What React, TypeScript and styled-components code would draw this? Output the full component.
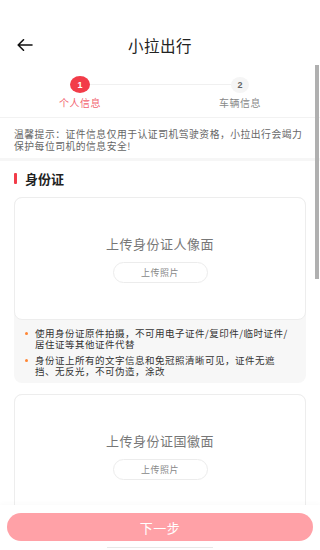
import React from 'react';
import styled, { createGlobalStyle } from 'styled-components';

const GlobalStyle = createGlobalStyle`
    html, body {
        margin: 0;
        padding: 0;
        background: #fff;
        overflow: hidden;
    }
    body {
        font-family: "Noto Sans CJK SC", "Noto Sans", sans-serif;
        color: #222;
    }
`

const notes = [
    '使用身份证原件拍摄，不可用电子证件/复印件/临时证件/居住证等其他证件代替',
    '身份证上所有的文字信息和免冠照清晰可见，证件无遮挡、无反光，不可伪造，涂改',
]

export default function App() {
    return (
        <Page>
            <GlobalStyle />
            <Header>
                <BackButton>
                    <svg width="16" height="12" viewBox="0 0 16 12" fill="none">
                        <path d="M15 6H1.5M6.5 0.8L1.2 6l5.3 5.2" stroke="#111" strokeWidth="1.6" strokeLinecap="round" strokeLinejoin="round" />
                    </svg>
                </BackButton>
                <Title>小拉出行</Title>
            </Header>

            <Steps>
                <Track>
                    <StepDot active>1</StepDot>
                    <TrackLine />
                    <StepDot>2</StepDot>
                </Track>
                <Labels>
                    <StepLabel active>个人信息</StepLabel>
                    <StepLabel>车辆信息</StepLabel>
                </Labels>
            </Steps>

            <Tip>温馨提示：证件信息仅用于认证司机驾驶资格，小拉出行会竭力保护每位司机的信息安全!</Tip>

            <Section>
                <SectionTitle>身份证</SectionTitle>

                <UploadGroup>
                    <UploadCard>
                        <UploadText>上传身份证人像面</UploadText>
                        <UploadButton>上传照片</UploadButton>
                    </UploadCard>
                    <Notes>
                        {notes.map((n) => (
                            <Note key={n}>{n}</Note>
                        ))}
                    </Notes>
                </UploadGroup>

                <UploadGroup>
                    <UploadCard>
                        <UploadText>上传身份证国徽面</UploadText>
                        <UploadButton>上传照片</UploadButton>
                    </UploadCard>
                    <Spacer />
                </UploadGroup>
            </Section>

            <Footer>
                <NextButton>下一步</NextButton>
                <HomeBar />
            </Footer>

            <ScrollThumb />
        </Page>
    )
}

const Page = styled.div`
    position: relative;
    width: 320px;
    height: 550px;
    overflow: hidden;
    background: #fff;
`

const Header = styled.div`
    margin-top: 25px;
    height: 40px;
    display: flex;
    align-items: center;
    justify-content: center;
    position: relative;
`

const BackButton = styled.div`
    position: absolute;
    left: 17px;
    top: 14px;
    display: flex;
`

const Title = styled.div`
    font-size: 15.5px;
    color: #222;
    letter-spacing: 0.5px;
`

const Steps = styled.div`
    height: 52px;
    border-bottom: 1px solid #f2f2f2;
    display: flex;
    flex-direction: column;
`

const Track = styled.div`
    margin-top: 11px;
    display: flex;
    align-items: center;
    padding-left: 70px;
    height: 17px;
`

const StepDot = styled.div<{ active?: boolean }>`
    width: ${(p) => (p.active ? '20px' : '18px')};
    height: ${(p) => (p.active ? '17px' : '16px')};
    border-radius: 50%;
    background: ${(p) => (p.active ? '#f23c49' : '#f5f5f5')};
    color: ${(p) => (p.active ? '#fff' : '#666')};
    font-family: "Liberation Sans", sans-serif;
    font-weight: bold;
    font-size: 9px;
    display: flex;
    align-items: center;
    justify-content: center;
`

const TrackLine = styled.div`
    width: 141px;
    height: 1px;
    background: #f0f0f0;
`

const Labels = styled.div`
    display: grid;
    grid-template-columns: 160px 160px;
    margin-top: 3px;
`

const StepLabel = styled.div<{ active?: boolean }>`
    text-align: center;
    font-size: 10px;
    letter-spacing: 0.5px;
    line-height: 14px;
    color: ${(p) => (p.active ? '#f2646f' : '#888')};
`

const Tip = styled.div`
    padding: 11px 14px 6px 14px;
    font-size: 9.8px;
    letter-spacing: 0.5px;
    line-height: 11.5px;
    color: #666;
    border-bottom: 3px solid #f6f6f6;
`

const Section = styled.div`
    padding: 9px 14px 0;
    display: flex;
    flex-direction: column;
    gap: 11px;
`

const SectionTitle = styled.div`
    display: flex;
    align-items: center;
    gap: 8px;
    font-size: 13px;
    font-weight: bold;
    line-height: 17px;
    color: #222;
    margin-bottom: -1px;

    &::before {
        content: '';
        width: 3px;
        height: 11px;
        border-radius: 1px;
        background: #f23c49;
    }
`

const UploadGroup = styled.div`
    background: #f7f7f7;
    border-radius: 8px;
`

const UploadCard = styled.div`
    background: #fff;
    border: 1px solid #ededed;
    border-radius: 8px;
    height: 123px;
    display: flex;
    flex-direction: column;
    align-items: center;
    padding-top: 37px;
    box-sizing: border-box;
`

const UploadText = styled.div`
    font-size: 13px;
    letter-spacing: 0.5px;
    line-height: 18px;
    color: #777;
`

const UploadButton = styled.div`
    margin-top: 9px;
    width: 95px;
    height: 21px;
    box-sizing: border-box;
    border: 1px solid #ececec;
    border-radius: 11px;
    font-size: 9px;
    letter-spacing: 0.5px;
    color: #888;
    display: flex;
    align-items: center;
    justify-content: center;
`

const Notes = styled.div`
    padding: 8px 16px 7px 21px;
    display: flex;
    flex-direction: column;
    gap: 6px;
`

const Note = styled.div`
    position: relative;
    font-size: 9.5px;
    letter-spacing: 0.5px;
    line-height: 10.5px;
    color: #333;

    &::before {
        content: '';
        position: absolute;
        left: -10px;
        top: 4px;
        width: 3px;
        height: 3px;
        border-radius: 50%;
        background: #ff8533;
    }
`

const Spacer = styled.div`
    height: 60px;
`

const Footer = styled.div`
    position: absolute;
    left: 0;
    right: 0;
    bottom: 0;
    height: 45px;
    background: rgba(255, 255, 255, 0.97);
    box-shadow: 0 -2px 4px rgba(0, 0, 0, 0.02);
    display: flex;
    flex-direction: column;
    align-items: center;
    padding-top: 8px;
    box-sizing: border-box;
`

const NextButton = styled.div`
    width: 306px;
    height: 28px;
    border-radius: 14px;
    background: #ffa1a7;
    color: #fff;
    font-size: 13px;
    letter-spacing: 0.5px;
    display: flex;
    align-items: center;
    justify-content: center;
`

const HomeBar = styled.div`
    margin-top: 6px;
    width: 106px;
    height: 1px;
    background: #e8e8e8;
`

const ScrollThumb = styled.div`
    position: absolute;
    right: 1px;
    top: 65px;
    width: 4px;
    height: 214px;
    background: #b0b0b0;
`
